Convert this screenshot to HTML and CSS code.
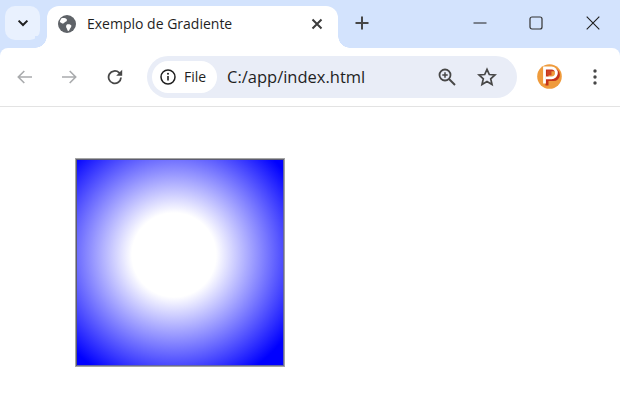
FILE: index.html
```html
<!DOCTYPE html>
<html lang="pt">
<head>
<meta charset="utf-8">
<title>Exemplo de Gradiente</title>
<link rel="stylesheet" href="styles.css">
</head>
<body>
<header class="chrome">
  <div class="tabstrip">
    <button class="tab-search" aria-label="Pesquisar guias">
      <svg width="16" height="16" viewBox="0 0 16 16"><path d="M3.600 5.600 8 10l4.400-4.400" fill="none" stroke="#1f1f1f" stroke-width="2"/></svg>
    </button>
    <div class="tab">
      <svg class="favicon" width="18" height="18" viewBox="0 0 18 18"><circle cx="9" cy="9" r="9" fill="#5f6368"/><path d="M3.500 3.200c2-.6 4-.3 5 .7 1 1.100.2 2.400-1 2.900-1.100.5-1.300 1.600-2.500 1.600-1.100 0-2-.6-3.200-1.500.2-1.500.8-2.700 1.700-3.700zM9.500 9.300c1.300-.4 3 0 3.700 1 .6 1-.3 2.200-1.100 3.200-.6.800-.6 2.100-1.600 2.400-.9.200-1.200-.9-1.400-1.900-.2-1-1.200-1.500-1-2.600.2-1.100.5-1.700 1.400-2.100z" fill="#fff"/></svg>
      <span class="tab-title">Exemplo de Gradiente</span>
      <svg class="tab-close" width="12" height="12" viewBox="0 0 12 12"><path d="M1.500 1.500l9 9m0-9-9 9" fill="none" stroke="#3c3c3c" stroke-width="2"/></svg>
    </div>
    <button class="new-tab" aria-label="Nova guia">
      <svg width="14" height="14" viewBox="0 0 14 14"><path d="M7 .5v13M.5 7h13" fill="none" stroke="#474747" stroke-width="2"/></svg>
    </button>
    <div class="window-controls">
      <svg width="14" height="14" viewBox="0 0 14 14"><path d="M.5 7h13" fill="none" stroke="#1f1f1f" stroke-width="1"/></svg>
      <svg class="maximize" width="14" height="14" viewBox="0 0 14 14"><rect x="1" y="1" width="12" height="12" rx="2" fill="none" stroke="#333" stroke-width="1.200"/></svg>
      <svg width="14" height="14" viewBox="0 0 14 14"><path d="M.7.700l12.600 12.600m0-12.600L.7 13.300" fill="none" stroke="#1f1f1f" stroke-width="1.100"/></svg>
    </div>
  </div>
  <nav class="toolbar">
    <svg class="nav-icon" width="15" height="14" viewBox="0 0 15 14"><path d="M15 7H1.500m5.800-6L1.300 7l6 6" fill="none" stroke="#a9abad" stroke-width="1.600"/></svg>
    <svg class="nav-icon" width="15" height="14" viewBox="0 0 15 14"><path d="M0 7h13.500M7.700 1l6 6-6 6" fill="none" stroke="#a9abad" stroke-width="1.600"/></svg>
    <svg class="nav-icon reload" width="16" height="16" viewBox="0 0 16 16"><path d="M14 8.500a6.200 6.200 0 1 1-1.900-4.800L14 5.500" fill="none" stroke="#474747" stroke-width="1.800"/><path d="M15.200.8v6h-6z" fill="#474747"/></svg>
    <div class="omnibox">
      <div class="chip">
        <svg width="16" height="16" viewBox="0 0 16 16"><circle cx="8" cy="8" r="7" fill="none" stroke="#1f1f1f" stroke-width="1.500"/><path d="M8 7v4.500" stroke="#1f1f1f" stroke-width="1.600"/><circle cx="8" cy="4.800" r="1" fill="#1f1f1f"/></svg>
        <span>File</span>
      </div>
      <span class="url">C:/app/index.html</span>
      <svg class="zoom-icon" width="18" height="18" viewBox="0 0 18 18"><circle cx="7" cy="7" r="5.500" fill="none" stroke="#474747" stroke-width="1.800"/><path d="M11 11l6 6" stroke="#474747" stroke-width="2"/><path d="M7 4.300v5.400M4.300 7h5.400" stroke="#474747" stroke-width="1.500"/></svg>
      <svg class="star-icon" width="20" height="20" viewBox="0 0 20 20"><path d="M10 2.300l2.300 5.200 5.700.5-4.300 3.800 1.300 5.600-5-3-5 3 1.300-5.600L2 8l5.700-.5z" fill="none" stroke="#474747" stroke-width="1.700"/></svg>
    </div>
    <svg class="avatar" width="25" height="25" viewBox="0 0 25 25"><circle cx="12.500" cy="12.500" r="12.300" fill="#ef9b3c"/><path d="M10 21.500V5.800h6.500a4.800 4.800 0 0 1 0 9.800H11" fill="none" stroke="#c5331a" stroke-width="3"/><path d="M7.500 19.500V4h7a4.800 4.800 0 0 1 0 9.800H9" fill="none" stroke="#fff" stroke-width="2.800"/><path d="M10 6.500h4.500v4.800H10z" fill="#cf4426"/></svg>
    <svg class="menu-icon" width="4" height="16" viewBox="0 0 4 16"><circle cx="2" cy="2" r="1.700" fill="#474747"/><circle cx="2" cy="8" r="1.700" fill="#474747"/><circle cx="2" cy="14" r="1.700" fill="#474747"/></svg>
  </nav>
</header>
<main class="page">
  <div class="gradient-box"></div>
</main>
</body>
</html>
```
FILE: styles.css
```css
* { box-sizing: border-box; }
html, body { margin: 0; height: 100%; background: #fff; overflow: hidden; }
body { font-family: "Open Sans", "Liberation Sans", sans-serif; color: #1f1f1f; }
button { border: 0; padding: 0; background: none; display: flex; align-items: center; justify-content: center; }
.chrome { background: #d3e3fd; }
.tabstrip { height: 48px; display: flex; align-items: flex-start; padding: 6px 20px 0 5px; }
.tab-search { width: 35px; height: 34px; border-radius: 10px; background: #e9f1fe; }
.tab { position: relative; width: 291px; height: 42px; margin-left: 7px; background: #fff; border-radius: 12px 12px 0 0; display: flex; align-items: center; padding: 0 15px 6px 11px; }
.tab::before, .tab::after { content: ""; position: absolute; bottom: 0; width: 12px; height: 12px; background: radial-gradient(circle at var(--cx) 0, #d3e3fd 11.500px, #fff 12px); }
.tab::before { left: -12px; --cx: 0; }
.tab::after { right: -12px; --cx: 12px; }
.tab-title { margin: 0 0 2px 11px; flex: 1; font-size: 14px; color: #1f1f1f; }
.new-tab { width: 14px; height: 14px; margin: 10px 0 0 17px; }
.window-controls { margin-left: auto; margin-top: 10px; display: flex; gap: 42px; }
.maximize { margin-right: 1px; }
.toolbar { height: 59px; background: #fff; border-radius: 8px 8px 0 0; border-bottom: 1px solid #e3e3e3; display: flex; align-items: center; padding-left: 17px; padding-bottom: 1px; }
.nav-icon { margin-right: 30px; flex: none; }
.nav-icon.reload { margin-right: 24px; }
.omnibox { flex: none; width: 370px; height: 42px; border-radius: 21px; background: #e9edf7; display: flex; align-items: center; padding-left: 5px; }
.chip { flex: none; width: 65px; height: 32px; border-radius: 16px; background: #fff; display: flex; align-items: center; padding-left: 8px; gap: 8px; font-size: 14px; font-weight: 500; }
.url { margin-left: 10px; font-size: 16.500px; flex: 1; color: #1f1f1f; }
.zoom-icon { margin-right: 21px; }
.star-icon { margin-right: 20px; }
.avatar { margin-left: 20px; }
.menu-icon { margin-left: 31px; }
.page { padding: 51px 0 0 75px; }
.gradient-box { width: 210px; height: 209px; border: 1px solid #a5a5a5; box-shadow: inset 1px 1px 0 #5c5c70, inset -1px -1px 0 #6666a0; background: radial-gradient(circle at 98px 96px, #fff 42px, #00f 138px); }
```
